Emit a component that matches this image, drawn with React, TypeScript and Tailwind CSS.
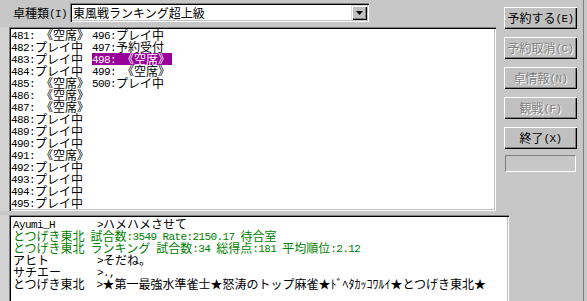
import React from 'react';

// Splits a string into half-width (ASCII) and full-width runs so that
// ASCII takes 6px and CJK takes 12px, like a 12px bitmap Gothic font.
function Txt({ s }: { s: string }) {
  const runs: { t: string; wide: boolean }[] = [];
  for (const ch of s) {
    const wide = ch.charCodeAt(0) > 0x7f;
    const last = runs[runs.length - 1];
    if (last && last.wide === wide) last.t += ch;
    else runs.push({ t: ch, wide });
  }
  return (
    <>
      {runs.map((r, i) =>
        r.wide ? (
          <span
            key={i}
            className="inline-block align-top h-[12px] leading-[12px] font-['Noto_Sans_CJK_JP',sans-serif] text-[12px]"
          >
            {r.t}
          </span>
        ) : (
          <span
            key={i}
            className="inline-block align-top h-[12px] leading-[14px] font-['Liberation_Mono',monospace] text-[11px] tracking-[-0.6px]"
          >
            {r.t}
          </span>
        )
      )}
    </>
  );
}

function Accel({ pre, k, post, disabled }: { pre: string; k: string; post: string; disabled?: boolean }) {
  return (
    <span
      className={
        'whitespace-pre h-[12px] leading-[12px] flex ' +
        (disabled ? 'text-[#808080] [text-shadow:1px_1px_0_#ffffff]' : 'text-black')
      }
    >
      <Txt s={pre} />
      <span className="underline underline-offset-1">
        <Txt s={k} />
      </span>
      <Txt s={post} />
    </span>
  );
}

function Btn({ pre, k, post, disabled }: { pre: string; k: string; post: string; disabled?: boolean }) {
  return (
    <div className="w-[73px] h-[22px] flex items-center justify-center bg-[#c0c0c0] shadow-[inset_1px_1px_0_#ffffff,inset_-1px_-1px_0_#000000,inset_-2px_-2px_0_#808080]">
      <Accel pre={pre} k={k} post={post} disabled={disabled} />
    </div>
  );
}

const sunken =
  'shadow-[inset_1px_1px_0_#808080,inset_2px_2px_0_#000000,inset_-1px_-1px_0_#ffffff,inset_-2px_-2px_0_#c0c0c0]';

const tables: { no: number; st: string }[] = [
  { no: 481, st: ' 《空席》' },
  { no: 482, st: 'プレイ中' },
  { no: 483, st: 'プレイ中' },
  { no: 484, st: 'プレイ中' },
  { no: 485, st: ' 《空席》' },
  { no: 486, st: ' 《空席》' },
  { no: 487, st: ' 《空席》' },
  { no: 488, st: 'プレイ中' },
  { no: 489, st: 'プレイ中' },
  { no: 490, st: 'プレイ中' },
  { no: 491, st: ' 《空席》' },
  { no: 492, st: 'プレイ中' },
  { no: 493, st: 'プレイ中' },
  { no: 494, st: 'プレイ中' },
  { no: 495, st: 'プレイ中' },
  { no: 496, st: 'プレイ中' },
  { no: 497, st: '予約受付' },
  { no: 498, st: ' 《空席》' },
  { no: 499, st: ' 《空席》' },
  { no: 500, st: 'プレイ中' },
];

const chat: { s: string; sys?: boolean }[] = [
  { s: 'Ayumi_H       >ハメハメさせて' },
  { s: 'とつげき東北 試合数:3549 Rate:2150.17 待合室', sys: true },
  { s: 'とつげき東北 ランキング 試合数:34 総得点:181 平均順位:2.12', sys: true },
  { s: 'アヒト        >そだね。' },
  { s: 'サチエー      >.,' },
  { s: 'とつげき東北  >★第一最強水準雀士★怒涛のトップ麻雀★ﾄﾞﾍﾀｶｯｺﾜﾙｲ★とつげき東北★' },
];

export default function App() {
  const selected = 498;
  const cols = [tables.slice(0, 15), tables.slice(15)];

  return (
    <div className="w-[587px] h-[301px] flex overflow-hidden bg-[#c7c7c7] select-none">
      <div className="w-[584px] h-full flex flex-col border-r border-[#808080]">
        <div className="flex h-[211px]">
          {/* table type + table list */}
          <div className="w-[496px] flex flex-col">
            <div className="h-[27px] flex items-start pt-[3px]">
              <div className="w-[70px] h-[19px] pl-[13px] flex items-center">
                <Accel pre="卓種類(" k="I" post=")" />
              </div>
              <div className={'w-[299px] h-[19px] bg-white flex items-center pl-[3px] pr-[2px] ' + sunken}>
                <div className="flex-1 whitespace-pre h-[12px] leading-[12px] text-black">
                  <Txt s="東風戦ランキング超上級" />
                </div>
                <div className="w-[16px] h-[15px] bg-[#c0c0c0] flex items-center justify-center shadow-[inset_1px_1px_0_#dfdfdf,inset_2px_2px_0_#ffffff,inset_-1px_-1px_0_#000000,inset_-2px_-2px_0_#808080]">
                  <svg width="7" height="4" viewBox="0 0 7 4">
                    <path d="M0 0h7L3.5 4z" fill="#000" />
                  </svg>
                </div>
              </div>
            </div>
            <div className="flex flex-1">
              <div className="w-[9px] bg-[#d2d2d2]" />
              <div className={'w-[487px] h-[184px] bg-white p-[2px] flex ' + sunken}>
                {cols.map((col, ci) => (
                  <div key={ci} className="w-[81px] flex flex-col">
                    {col.map((t) => (
                      <div
                        key={t.no}
                        className={
                          'h-[12px] w-[80px] leading-[12px] whitespace-pre ' +
                          (t.no === selected ? 'bg-[#990099] text-white' : 'text-black')
                        }
                      >
                        <Txt s={`${t.no}:${t.st}`} />
                      </div>
                    ))}
                  </div>
                ))}
              </div>
            </div>
          </div>

          {/* action buttons */}
          <div className="flex flex-col gap-[8px] pl-[8px] pt-[7px]">
            <Btn pre="予約する(" k="E" post=")" />
            <Btn pre="予約取消(" k="C" post=")" disabled />
            <Btn pre="卓情報(" k="N" post=")" disabled />
            <Btn pre="観戦(" k="F" post=")" disabled />
            <Btn pre="終了(" k="X" post=")" />
            <div className="ml-[1px] mt-[-2px] w-[71px] h-[17px] border border-t-[#808080] border-l-[#808080] border-b-white border-r-white" />
          </div>
        </div>

        {/* chat log */}
        <div className="flex mt-[4px] flex-1">
          <div className="w-[9px] bg-[#d2d2d2]" />
          <div className={'w-[500px] h-[90px] bg-white pl-[4px] pt-[3px] ' + sunken}>
            {chat.map((l, i) => (
              <div
                key={i}
                className={'h-[12px] leading-[12px] whitespace-pre ' + (l.sys ? 'text-[#008000]' : 'text-black')}
              >
                <Txt s={l.s} />
              </div>
            ))}
          </div>
        </div>
      </div>
    </div>
  );
}
